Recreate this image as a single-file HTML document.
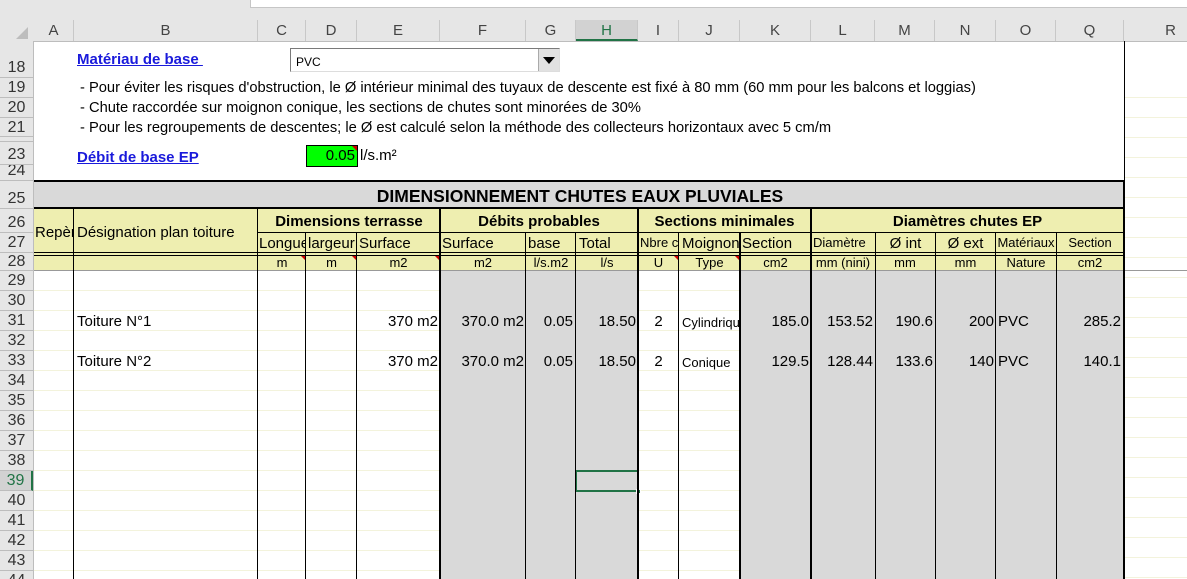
<!DOCTYPE html>
<html><head><meta charset="utf-8"><style>
*{margin:0;padding:0;box-sizing:border-box}
html,body{width:1187px;height:579px;overflow:hidden}
body{background:#fff;position:relative;font-family:"Liberation Sans",Arial,sans-serif;font-size:15px;color:#000}
div{position:absolute}
.t{white-space:nowrap;line-height:20px}
.ch{top:20px;height:21px;line-height:21px;text-align:center;color:#444;font-size:15px;border-right:1px solid #c8c8c8}
.rh{left:0;width:33px;height:20px;line-height:20px;text-align:center;color:#333;font-size:16px;border-bottom:1px solid #bdbdbd;background:#e6e6e6}
.vl{background:#000;width:1px}
.vt{background:#000;width:2px}
.r{text-align:right}
.c{text-align:center}
.s{font-size:13px}
.tri{width:0;height:0;border-top:5px solid #c00;border-left:5px solid transparent}
</style></head><body>
<div style="left:0;top:0;width:1187px;height:41px;background:#e6e6e6"></div>
<div style="left:250px;top:0;width:937px;height:8px;background:#fff;border-bottom:1px solid #c6c6c6;border-left:1px solid #c6c6c6"></div>
<div style="left:0;top:41px;width:1187px;height:1px;background:#bdbdbd"></div>
<div style="left:16px;top:27px;width:0;height:0;border-left:12px solid transparent;border-bottom:12px solid #bdbdbd"></div>
<div class="ch" style="left:34px;width:40px">A</div>
<div class="ch" style="left:74px;width:184px">B</div>
<div class="ch" style="left:258px;width:48px">C</div>
<div class="ch" style="left:306px;width:51px">D</div>
<div class="ch" style="left:357px;width:83px">E</div>
<div class="ch" style="left:440px;width:86px">F</div>
<div class="ch" style="left:526px;width:50px">G</div>
<div class="ch" style="left:576px;width:62px;background:#d2d2d2;color:#217346;border-bottom:2px solid #217346">H</div>
<div class="ch" style="left:638px;width:41px">I</div>
<div class="ch" style="left:679px;width:61px">J</div>
<div class="ch" style="left:740px;width:71px">K</div>
<div class="ch" style="left:811px;width:64px">L</div>
<div class="ch" style="left:875px;width:60px">M</div>
<div class="ch" style="left:935px;width:61px">N</div>
<div class="ch" style="left:996px;width:60px">O</div>
<div class="ch" style="left:1056px;width:68px">Q</div>
<div class="ch" style="left:1124px;width:63px;border:none;padding-left:30px">R</div>
<div style="left:0;top:41px;width:34px;height:538px;background:#e6e6e6;border-right:1px solid #bdbdbd"></div>
<div class="rh" style="top:41px;height:37px;line-height:54px">18</div>
<div class="rh" style="top:78px">19</div>
<div class="rh" style="top:98px">20</div>
<div class="rh" style="top:118px;height:19px">21</div>
<div class="rh" style="top:137px;height:5px"></div>
<div class="rh" style="top:142px;height:23px;line-height:26px">23</div>
<div class="rh" style="top:165px;height:16px;line-height:12px;overflow:hidden">24</div>
<div class="rh" style="top:181px;height:28px;line-height:36px">25</div>
<div class="rh" style="top:209px;height:24px;line-height:28px">26</div>
<div class="rh" style="top:233px">27</div>
<div class="rh" style="top:253px;height:18px;line-height:18px">28</div>
<div class="rh" style="top:271px">29</div><div class="rh" style="top:291px">30</div><div class="rh" style="top:311px">31</div><div class="rh" style="top:331px">32</div><div class="rh" style="top:351px">33</div><div class="rh" style="top:371px">34</div><div class="rh" style="top:391px">35</div><div class="rh" style="top:411px">36</div><div class="rh" style="top:431px">37</div><div class="rh" style="top:451px">38</div><div class="rh" style="top:471px;color:#217346;background:#d2d2d2;border-right:2px solid #217346">39</div><div class="rh" style="top:491px">40</div><div class="rh" style="top:511px">41</div><div class="rh" style="top:531px">42</div><div class="rh" style="top:551px">43</div><div class="rh" style="top:571px">44</div>
<div class="vl" style="left:1124px;top:41px;height:140px"></div>
<div class="t" style="left:77px;top:50px;font-weight:bold;color:#1a1adb;text-decoration:underline">Matériau de base&nbsp;</div>
<div style="left:290px;top:48px;width:270px;height:24px;border:1px solid #7a7a7a;border-bottom-color:#ddd;border-right-color:#ddd;background:#fff"></div>
<div class="t" style="left:296px;top:52px;font-size:12px">PVC</div>
<div style="left:538px;top:49px;width:21px;height:22px;background:#e1e1e1;border-left:1px solid #aaa"></div>
<div style="left:543px;top:57px;width:0;height:0;border-left:6px solid transparent;border-right:6px solid transparent;border-top:7px solid #000"></div>
<div class="t" style="left:80px;top:78px;font-size:14.7px">- Pour éviter les risques d'obstruction, le Ø intérieur minimal des tuyaux de descente est fixé à 80 mm (60 mm pour les balcons et loggias)</div>
<div class="t" style="left:80px;top:98px;font-size:14.7px">- Chute raccordée sur moignon conique, les sections de chutes sont minorées de 30%</div>
<div class="t" style="left:80px;top:118px;font-size:14.7px">- Pour les regroupements de descentes; le Ø est calculé selon la méthode des collecteurs horizontaux avec 5 cm/m</div>
<div class="t" style="left:77px;top:148px;font-weight:bold;color:#1a1adb;text-decoration:underline">Débit de base EP</div>
<div style="left:306px;top:145px;width:52px;height:22px;background:#00ff00;border:1px solid #000"></div>
<div class="t r" style="left:306px;top:146px;width:49px">0.05</div>
<div class="tri" style="left:352px;top:146px"></div>
<div class="t" style="left:360px;top:146px">l/s.m²</div>
<div style="left:1125px;top:78px;width:62px;height:500px;background:repeating-linear-gradient(#fff 0,#fff 19px,#f3f3dc 19px,#f3f3dc 20px)"></div>
<div style="left:34px;top:180px;width:1091px;height:2px;background:#000"></div>
<div style="left:34px;top:182px;width:1090px;height:26px;background:#d9d9d9"></div>
<div class="t c" style="left:34px;top:186px;width:1092px;font-weight:bold;font-size:17.5px">DIMENSIONNEMENT CHUTES EAUX PLUVIALES</div>
<div style="left:34px;top:207px;width:1091px;height:2px;background:#000"></div>
<div style="left:34px;top:209px;width:1090px;height:62px;background:#eeeeb0"></div>
<div style="left:258px;top:232px;width:866px;height:1px;background:#000"></div>
<div style="left:34px;top:252px;width:1090px;height:1px;background:#000"></div>
<div style="left:34px;top:255px;width:1090px;height:1px;background:#000"></div>
<div style="left:34px;top:270px;width:1153px;height:1px;background:#999"></div>
<div class="t" style="left:35px;top:223px;width:38px;overflow:hidden">Repère</div>
<div class="t" style="left:77px;top:223px">Désignation plan toiture</div>
<div class="t c" style="left:258px;top:212px;width:182px;font-weight:bold">Dimensions terrasse</div>
<div class="t c" style="left:440px;top:212px;width:198px;font-weight:bold">Débits probables</div>
<div class="t c" style="left:638px;top:212px;width:173px;font-weight:bold">Sections minimales</div>
<div class="t c" style="left:811px;top:212px;width:313px;font-weight:bold">Diamètres chutes EP</div>
<div class="t" style="left:259px;top:234px;width:47px;overflow:hidden">Longueur</div>
<div class="t" style="left:308px;top:234px">largeur</div>
<div class="t" style="left:359px;top:234px">Surface</div>
<div class="t" style="left:442px;top:234px">Surface</div>
<div class="t" style="left:528px;top:234px">base</div>
<div class="t" style="left:579px;top:234px">Total</div>
<div class="t s" style="left:640px;top:233px;width:38px;overflow:hidden">Nbre chutes</div>
<div class="t" style="left:682px;top:234px;width:58px;overflow:hidden">Moignon</div>
<div class="t" style="left:742px;top:234px">Section</div>
<div class="t s" style="left:813px;top:233px">Diamètre</div>
<div class="t c" style="left:875px;top:234px;width:61px">Ø int</div>
<div class="t c" style="left:935px;top:234px;width:61px">Ø ext</div>
<div class="t c s" style="left:996px;top:233px;width:60px">Matériaux</div>
<div class="t c s" style="left:1056px;top:233px;width:68px">Section</div>
<div class="t c s" style="left:258px;top:253px;width:48px">m</div>
<div class="t c s" style="left:306px;top:253px;width:51px">m</div>
<div class="t c s" style="left:357px;top:253px;width:83px">m2</div>
<div class="t c s" style="left:440px;top:253px;width:86px">m2</div>
<div class="t c s" style="left:526px;top:253px;width:50px">l/s.m2</div>
<div class="t c s" style="left:576px;top:253px;width:62px">l/s</div>
<div class="t c s" style="left:638px;top:253px;width:41px">U</div>
<div class="t c s" style="left:679px;top:253px;width:61px">Type</div>
<div class="t c s" style="left:740px;top:253px;width:71px">cm2</div>
<div class="t c s" style="left:811px;top:253px;width:64px">mm (nini)</div>
<div class="t c s" style="left:875px;top:253px;width:60px">mm</div>
<div class="t c s" style="left:935px;top:253px;width:61px">mm</div>
<div class="t c s" style="left:996px;top:253px;width:60px">Nature</div>
<div class="t c s" style="left:1056px;top:253px;width:68px">cm2</div>
<div class="tri" style="left:301px;top:256px"></div>
<div class="tri" style="left:352px;top:256px"></div>
<div class="tri" style="left:435px;top:256px"></div>
<div class="tri" style="left:674px;top:256px"></div>
<div class="tri" style="left:735px;top:256px"></div>
<div style="left:34px;top:271px;width:1090px;height:308px;background:repeating-linear-gradient(#fff 0,#fff 19px,#f3f3dc 19px,#f3f3dc 20px)"></div>
<div style="left:440px;top:271px;width:198px;height:308px;background:#d9d9d9"></div>
<div style="left:740px;top:271px;width:384px;height:308px;background:#d9d9d9"></div>
<div style="left:575px;top:470px;width:64px;height:22px;border:2px solid #217346"></div>
<div style="left:636px;top:489px;width:5px;height:5px;background:#217346;border:1px solid #fff"></div>
<div class="vl" style="left:73px;top:209px;height:370px"></div>
<div class="vl" style="left:257px;top:209px;height:370px"></div>
<div class="vl" style="left:305px;top:233px;height:346px"></div>
<div class="vl" style="left:356px;top:233px;height:346px"></div>
<div class="vt" style="left:439px;top:209px;height:370px"></div>
<div class="vl" style="left:525px;top:233px;height:346px"></div>
<div class="vl" style="left:575px;top:233px;height:346px"></div>
<div class="vt" style="left:637px;top:209px;height:370px"></div>
<div class="vl" style="left:678px;top:233px;height:346px"></div>
<div class="vt" style="left:739px;top:233px;height:346px"></div>
<div class="vt" style="left:810px;top:209px;height:370px"></div>
<div class="vl" style="left:875px;top:233px;height:346px"></div>
<div class="vl" style="left:935px;top:233px;height:346px"></div>
<div class="vl" style="left:995px;top:233px;height:346px"></div>
<div class="vl" style="left:1056px;top:233px;height:346px"></div>
<div class="vt" style="left:1123px;top:180px;height:399px"></div>
<div class="t" style="left:77px;top:312px">Toiture N°1</div>
<div class="t r" style="left:357px;top:312px;width:81px">370 m2</div>
<div class="t r" style="left:440px;top:312px;width:84px">370.0 m2</div>
<div class="t r" style="left:526px;top:312px;width:47px">0.05</div>
<div class="t r" style="left:576px;top:312px;width:60px">18.50</div>
<div class="t c" style="left:638px;top:312px;width:41px">2</div>
<div class="t s" style="left:682px;top:313px;width:57px;overflow:hidden">Cylindrique</div>
<div class="t r" style="left:740px;top:312px;width:69px">185.0</div>
<div class="t r" style="left:811px;top:312px;width:62px">153.52</div>
<div class="t r" style="left:875px;top:312px;width:58px">190.6</div>
<div class="t r" style="left:935px;top:312px;width:59px">200</div>
<div class="t" style="left:998px;top:312px">PVC</div>
<div class="t r" style="left:1056px;top:312px;width:65px">285.2</div>
<div class="t" style="left:77px;top:352px">Toiture N°2</div>
<div class="t r" style="left:357px;top:352px;width:81px">370 m2</div>
<div class="t r" style="left:440px;top:352px;width:84px">370.0 m2</div>
<div class="t r" style="left:526px;top:352px;width:47px">0.05</div>
<div class="t r" style="left:576px;top:352px;width:60px">18.50</div>
<div class="t c" style="left:638px;top:352px;width:41px">2</div>
<div class="t s" style="left:682px;top:353px">Conique</div>
<div class="t r" style="left:740px;top:352px;width:69px">129.5</div>
<div class="t r" style="left:811px;top:352px;width:62px">128.44</div>
<div class="t r" style="left:875px;top:352px;width:58px">133.6</div>
<div class="t r" style="left:935px;top:352px;width:59px">140</div>
<div class="t" style="left:998px;top:352px">PVC</div>
<div class="t r" style="left:1056px;top:352px;width:65px">140.1</div>
</body></html>
